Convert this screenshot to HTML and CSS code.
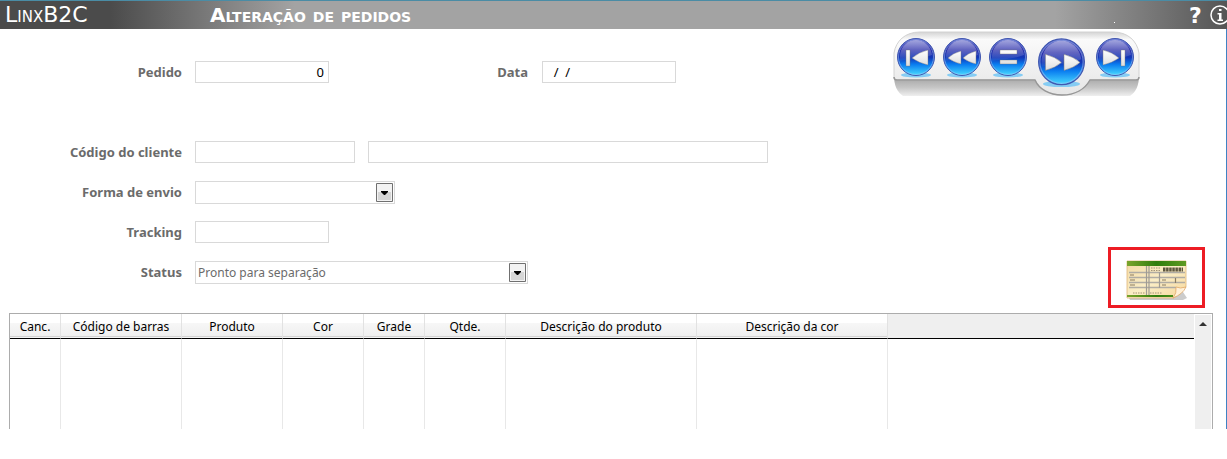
FILE: index.html
```
<!DOCTYPE html>
<html lang="pt-BR">
<head>
    <meta charset="UTF-8" />
    <meta name="viewport" content="width=device-width, initial-scale=1" />
    <title>LinxB2C - Alteração de pedidos</title>
    <link rel="stylesheet" href="styles.css">
</head>
<body>
    <!-- gradients shared by the navigation icons -->
    <svg class="defs" width="0" height="0" aria-hidden="true">
        <defs>
            <linearGradient id="ball" x1="0" y1="0" x2="0" y2="1">
                <stop offset="0" stop-color="#4a50c0"/>
                <stop offset="0.3" stop-color="#2226a6"/>
                <stop offset="0.52" stop-color="#1238b8"/>
                <stop offset="0.7" stop-color="#0a7df0"/>
                <stop offset="1" stop-color="#4adcff"/>
            </linearGradient>
            <linearGradient id="shine" x1="0" y1="0" x2="0" y2="1">
                <stop offset="0" stop-color="#fff" stop-opacity="0.5"/>
                <stop offset="1" stop-color="#fff" stop-opacity="0.04"/>
            </linearGradient>
            <linearGradient id="glyph" x1="0" y1="0" x2="0" y2="1">
                <stop offset="0" stop-color="#fff"/>
                <stop offset="1" stop-color="#dedede"/>
            </linearGradient>
            <g id="circle">
                <ellipse cx="19" cy="37" rx="15" ry="2.5" fill="#6cc4f5" opacity="0.8"/>
                <circle cx="19" cy="19" r="18.5" fill="url(#ball)" stroke="#4258b0"/>
                <circle cx="19" cy="19" r="17.5" fill="none" stroke="#a9c8f5" stroke-opacity="0.5"/>
                <path d="M3 17C4 8 11 2 19 2s15 6 16 15c-10 4-22 4-32 6z" fill="url(#shine)"/>
            </g>
        </defs>
    </svg>

    <header class="titlebar">
        <span class="brand">LinxB2C</span>
        <h1>Alteração de pedidos</h1>
        <span class="dot"></span>
        <button class="help-btn" aria-label="Ajuda">?</button>
        <button class="info-btn" aria-label="Informações">
            <svg width="20" height="20" viewBox="0 0 20 20">
                <circle cx="10" cy="10" r="9" fill="none" stroke="#fff" stroke-width="1.5"/>
                <path d="M9 4h2.500v2H9zM7.500 8h4v6.500H13V16H7.500v-1.500H9v-5H7.500z" fill="#fff"/>
            </svg>
        </button>
    </header>

    <main class="window">
        <div class="top">
            <form class="order-form">
                <div class="row row-first">
                    <label for="pedido">Pedido</label>
                    <input class="short number" type="text" id="pedido" value="0" />
                    <label class="date-label" for="data">Data</label>
                    <input class="short" type="text" id="data" value="  /  /" />
                </div>
                <div class="row">
                    <label for="cliente">Código do cliente</label>
                    <input class="code" type="text" id="cliente" />
                    <input class="client-name" type="text" aria-label="Nome do cliente" />
                </div>
                <div class="row">
                    <label for="envio">Forma de envio</label>
                    <select class="shipping" id="envio"><option></option></select>
                </div>
                <div class="row">
                    <label for="tracking">Tracking</label>
                    <input class="short" type="text" id="tracking" />
                </div>
                <div class="row">
                    <label for="status">Status</label>
                    <select class="status" id="status"><option>Pronto para separação</option></select>
                </div>
            </form>

            <div class="side">
                <nav class="player">
                    <svg class="panel" width="247" height="65" viewBox="0 0 247 65">
                        <defs>
                            <linearGradient id="shade" x1="0" y1="48" x2="0" y2="65" gradientUnits="userSpaceOnUse">
                                <stop offset="0" stop-color="#aaa"/>
                                <stop offset="0.5" stop-color="#c6c6c6"/>
                                <stop offset="1" stop-color="#efefef"/>
                            </linearGradient>
                            <linearGradient id="plate" x1="0" y1="0" x2="0" y2="1">
                                <stop offset="0" stop-color="#d4d4d4"/>
                                <stop offset="0.12" stop-color="#fafafa"/>
                                <stop offset="1" stop-color="#e6e6e6"/>
                            </linearGradient>
                        </defs>
                        <path d="M1 45h245c0 9-3 16-9 20H10C4 61 1 54 1 45z" fill="url(#shade)"/>
                        <path d="M1 22C3 10 12 1 27 1h193c15 0 24 9 26 21v24q0 3-3 3h-46C192 58 182 64 169 64s-23-6-27-15H4q-3 0-3-3z" fill="url(#plate)" stroke="#d2d2d2"/>
                        <path d="M1 46q0 3 3 3h138c4 9 14 15 27 15s23-6 28-15h46q3 0 3-3" fill="none" stroke="#979797" stroke-width="1.5"/>
                    </svg>
                    <button type="button" aria-label="Primeiro">
                        <svg width="38" height="40" viewBox="0 0 38 40"><use href="#circle"/>
                            <path d="M9 12h4v16H9zM31 12v15q-9-2-16-7 7-6 16-8z" fill="url(#glyph)" stroke="#777" stroke-width="0.4"/></svg>
                    </button>
                    <button type="button" aria-label="Anterior">
                        <svg width="38" height="40" viewBox="0 0 38 40"><use href="#circle"/>
                            <path d="M18 13v13q-8-2-13-6 5-5 13-7zM33 13v13q-8-2-13-6 5-5 13-7z" fill="url(#glyph)" stroke="#777" stroke-width="0.4"/></svg>
                    </button>
                    <button type="button" aria-label="Pesquisar">
                        <svg width="38" height="40" viewBox="0 0 38 40"><use href="#circle"/>
                            <path d="M11 12h17v4H11zM11 22h17v4H11z" fill="url(#glyph)" stroke="#777" stroke-width="0.4"/></svg>
                    </button>
                    <button type="button" class="big" aria-label="Próximo">
                        <svg width="47" height="50" viewBox="0 0 38 40"><use href="#circle"/>
                            <path d="M6 13v13q8-2 13-6.500Q14 15 6 13zM21 13v13q8-2 13-6.500Q29 15 21 13z" fill="url(#glyph)" stroke="#777" stroke-width="0.4"/></svg>
                    </button>
                    <button type="button" aria-label="Último">
                        <svg width="38" height="40" viewBox="0 0 38 40"><use href="#circle"/>
                            <path d="M7 12v15q9-2 16-7-7-6-16-8zM25 12h4v16h-4z" fill="url(#glyph)" stroke="#777" stroke-width="0.4"/></svg>
                    </button>
                </nav>

                <button type="button" class="slip-btn" aria-label="Boleto">
                    <svg width="62" height="42" viewBox="0 0 62 42">
                        <defs>
                            <linearGradient id="paper" x1="0" y1="0" x2="1" y2="1">
                                <stop offset="0" stop-color="#f2d9a4"/>
                                <stop offset="0.5" stop-color="#fbeec6"/>
                                <stop offset="1" stop-color="#f6d79c"/>
                            </linearGradient>
                            <linearGradient id="green" x1="0" y1="0" x2="1" y2="0">
                                <stop offset="0" stop-color="#7aa52c"/>
                                <stop offset="0.5" stop-color="#2f7d0c"/>
                                <stop offset="1" stop-color="#5f9a22"/>
                            </linearGradient>
                        </defs>
                        <path d="M3 38h45l7-9 6 9-4 2H4z" fill="#000" opacity="0.2"/>
                        <path d="M1 1h59v26L48 38H1z" fill="url(#paper)" stroke="#dfb678" stroke-width="0.8"/>
                        <path d="M1 1h59v5H1zM1 35h46v2H1z" fill="url(#green)"/>
                        <path d="M3 12.500h56M3 17.500h56M3 22.500h56M3 27.500h47" stroke="#b0aca4" stroke-width="1.5"/>
                        <path d="M20.500 6v29M23 6v29M33.500 12v16" stroke="#a09c94" stroke-width="1.2"/>
                        <path d="M4 15h4M4 20h5M4 25h5M36 20h4M36 25h4M49.500 18v5" stroke="#8a7d64" stroke-width="1.2"/>
                        <path d="M25 8h9M25 10.500h9M7 33h12M24 33h12" stroke="#a39478" stroke-width="1.2" stroke-dasharray="1.5 1"/>
                        <path d="M37 9.500h20" stroke="#5e563f" stroke-width="4" stroke-dasharray="2.5 0.6"/>
                        <path d="M47 38q4-5 3-11 4 2 10 0-3 7-13 11z" fill="#fff0d8" stroke="#e0a868" stroke-width="0.8"/>
                    </svg>
                </button>
            </div>
        </div>

        <div class="grid">
            <table>
                <colgroup>
                    <col class="w-canc"><col class="w-barras"><col class="w-produto"><col class="w-cor">
                    <col class="w-grade"><col class="w-cor"><col class="w-desc"><col class="w-desc"><col>
                </colgroup>
                <thead>
                    <tr>
                        <th>Canc.</th>
                        <th>Código de barras</th>
                        <th>Produto</th>
                        <th>Cor</th>
                        <th>Grade</th>
                        <th>Qtde.</th>
                        <th>Descrição do produto</th>
                        <th>Descrição da cor</th>
                        <td class="rest"></td>
                    </tr>
                </thead>
                <tbody>
                    <tr>
                        <td></td><td></td><td></td><td></td><td></td><td></td><td></td><td></td><td></td>
                    </tr>
                </tbody>
            </table>
            <div class="scrollbar">
                <button type="button" aria-label="Rolar para cima">
                    <svg width="8" height="4" viewBox="0 0 8 4"><path d="M4 0l4 4H0z" fill="#333"/></svg>
                </button>
            </div>
        </div>
    </main>
</body>
</html>
```
FILE: styles.css
```
* {
    box-sizing: border-box;
}
body {
    margin: 0;
    background: #fff;
    font-family: "Noto Sans", Tahoma, sans-serif;
    font-size: 12px;
    overflow-x: hidden;
}
button {
    padding: 0;
    border: none;
    background: none;
    cursor: pointer;
}
svg {
    display: block;
}
.defs {
    position: absolute;
}

/* title bar */
.titlebar {
    display: flex;
    align-items: center;
    height: 29px;
    border-top: 1px solid #4a8ca5;
    background: linear-gradient(to right, #4b4b4b 0, #4b4b4b 9%, #a3a3a3 24%, #a3a3a3 86%, #555 100%);
    color: #fff;
    font-family: "DejaVu Sans", Verdana, sans-serif;
    line-height: 28px;
    overflow: hidden;
}
.brand {
    width: 210px;
    padding-left: 5px;
    font-size: 22px;
    font-variant: small-caps;
}
.titlebar h1 {
    flex: 1;
    margin: 0;
    font-size: 20px;
    font-variant: small-caps;
}
.dot {
    width: 1px;
    height: 1px;
    margin: 14px 74px 0 0;
    background: #fff;
}
.help-btn {
    width: 13px;
    color: #fff;
    font: bold 22px "DejaVu Sans", sans-serif;
}
.info-btn {
    flex: none;
    margin: 0 -3px 0 8px;
}

/* form */
.window {
    border-right: 1px solid #3f83c4;
}
.top {
    display: flex;
    justify-content: space-between;
}
.order-form {
    padding-top: 32px;
}
.row {
    display: flex;
    height: 40px;
    align-items: flex-start;
}
.row-first {
    height: 80px;
}
.row label {
    width: 182px;
    margin-right: 13px;
    color: #6b6b6b;
    font-size: 13px;
    font-weight: bold;
    line-height: 22px;
    text-align: right;
}
.row .date-label {
    width: 199px;
    margin-right: 14px;
}
.row input,
.row select {
    height: 22px;
    padding: 0 4px;
    border: 1px solid #d9d9d9;
    border-radius: 0;
    background: #fff;
    color: #000;
    font-family: inherit;
    font-size: 13px;
}
.row .short {
    width: 134px;
}
.number {
    text-align: right;
}
.row .code {
    width: 160px;
    margin-right: 13px;
}
.row .client-name {
    width: 400px;
}
.row select {
    height: 23px;
    padding: 0 2px;
    color: #6b6b6b;
    font-size: 12px;
    appearance: none;
    background: #fff url("data:image/svg+xml,%3Csvg xmlns='http://www.w3.org/2000/svg' width='17' height='19'%3E%3Cpath d='M.5.5h16v18H.5z' fill='%23f3f3f3' stroke='%23707070'/%3E%3Cpath d='M2 9h13v8H2z' fill='%23d6d6d6'/%3E%3Cpath d='M5 8h7v1l-3 3H8L5 9z'/%3E%3C/svg%3E") no-repeat right 1px center;
}
.row .shipping {
    width: 200px;
}
.row .status {
    width: 333px;
}

/* record navigation and payment slip */
.side {
    display: flex;
    flex-direction: column;
    justify-content: space-between;
    width: 333px;
    padding: 2px 21px 0 0;
    height: 279px;
}
.player {
    position: relative;
    display: flex;
    align-items: flex-start;
    gap: 8px;
    width: 247px;
    height: 65px;
    padding: 7px 4px;
}
.panel {
    position: absolute;
    top: 0;
    left: 0;
}
.player button {
    position: relative;
}
.player .big {
    margin: 0 3px;
}
.slip-btn {
    display: flex;
    align-items: center;
    justify-content: center;
    align-self: flex-end;
    width: 97px;
    height: 61px;
    padding-top: 6px;
    border: 3px solid #ed1c24;
}

/* items grid */
.grid {
    display: flex;
    height: 116px;
    margin: 5px 13px 0 9px;
    border: 1px solid #acacac;
    border-bottom: none;
}
table {
    flex: 1;
    height: 115px;
    border-collapse: separate;
    border-spacing: 0;
    table-layout: fixed;
}
th,
.rest {
    height: 25px;
    padding: 0;
    border-bottom: 1px solid #000;
}
th {
    border-right: 1px solid #e2e2e2;
    background: linear-gradient(#fff 0, #fff 9px, #f7f7f7 9px, #efefef 22px, #d2d2d2 22px, #d2d2d2 23px, #f5f5f5 23px);
    font-size: 12px;
    font-weight: normal;
}
.rest {
    background: #efefef;
}
tbody td {
    border-right: 1px solid #e8e8e8;
}
tbody td:last-child {
    border-right: none;
}
.w-canc { width: 51px; }
.w-barras { width: 121px; }
.w-produto { width: 101px; }
.w-cor { width: 81px; }
.w-grade { width: 61px; }
.w-desc { width: 191px; }
.scrollbar {
    width: 18px;
    border: 1px solid #fff;
    border-bottom: none;
    background: #efefef;
}
.scrollbar button {
    display: flex;
    align-items: center;
    justify-content: center;
    width: 100%;
    height: 17px;
}
```
